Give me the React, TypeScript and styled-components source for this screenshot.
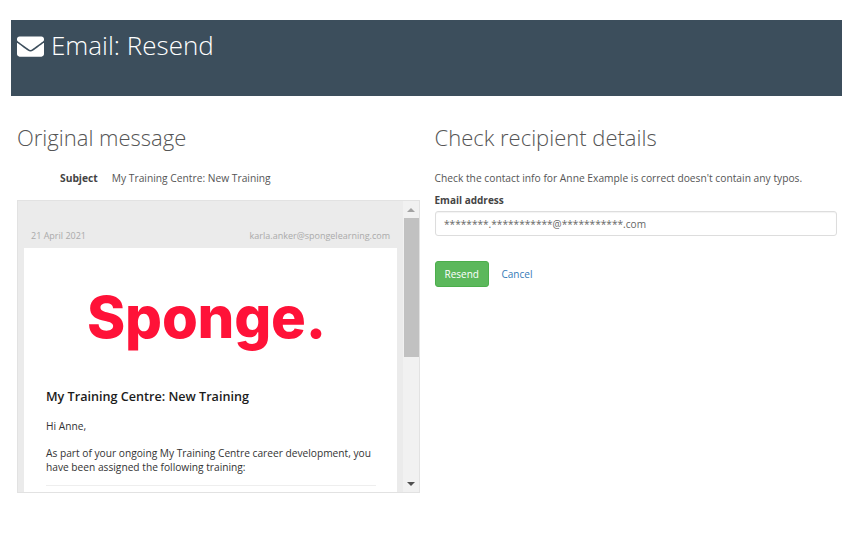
import React from "react";
import styled, { createGlobalStyle } from "styled-components";
import { FaEnvelope } from "react-icons/fa";

const GlobalStyle = createGlobalStyle`
  html, body {
    margin: 0;
    padding: 0;
    background: #fff;
    font-family: "Open Sans", "Liberation Sans", sans-serif;
  }
  * {
    box-sizing: border-box;
  }
`;

const Page = styled.div`
  width: 847px;
  height: 536px;
  padding: 20px 5px 0 10.5px;
  overflow: hidden;
`;

const Banner = styled.header`
  height: 76px;
  background: #3c4e5c;
  color: #fff;
  display: flex;
  align-items: flex-start;
  gap: 7px;
  padding: 8px 0 0 6.5px;
`;

const BannerIcon = styled(FaEnvelope)`
  margin-top: 5px;
`;

const BannerTitle = styled.h1`
  margin: 0;
  font-size: 26px;
  line-height: 35px;
  font-weight: 300;
`;

const Columns = styled.div`
  display: grid;
  grid-template-columns: 403px 402.5px;
  column-gap: 14.5px;
  padding: 25px 0 0 6.5px;
`;

const Column = styled.section`
  display: flex;
  flex-direction: column;
`;

const SectionTitle = styled.h2`
  margin: 0;
  font-size: 22px;
  line-height: 32px;
  font-weight: 300;
  color: #555;
`;

const SubjectRow = styled.div`
  display: flex;
  gap: 14px;
  margin-top: 18px;
  padding-left: 43px;
  font-size: 10.25px;
  line-height: 14px;
  color: #555;
`;

const SubjectLabel = styled.strong`
  font-weight: 700;
  color: #444;
`;

const Preview = styled.div`
  display: flex;
  height: 293px;
  margin-top: 15px;
  border: 1px solid #e2e2e2;
  overflow: hidden;
`;

const Message = styled.div`
  flex: 1;
  background: #ebebeb;
  padding: 0 6px 0 6px;
  overflow: hidden;
`;

const MessageMeta = styled.div`
  display: flex;
  justify-content: space-between;
  padding: 28px 7px 5px 7px;
  font-size: 9px;
  line-height: 14px;
  color: #aaa;
`;

const MessageCard = styled.div`
  background: #fff;
  padding: 32px 21px 0 22px;
  height: 260px;
`;

const LogoRow = styled.div`
  display: flex;
  padding-left: 41px;
  height: 95px;
`;

const Logo = styled.span`
  font-family: Inter, "Liberation Sans", sans-serif;
  font-size: 58px;
  line-height: 74px;
  font-weight: 800;
  letter-spacing: -0.2px;
  color: #ff1238;
`;

const MessageHeading = styled.h3`
  margin: 13px 0 0;
  font-size: 12.6px;
  line-height: 18px;
  font-weight: 600;
  color: #1c1c1c;
`;

const MessageText = styled.p`
  margin: 13px 0 0;
  font-size: 10.2px;
  line-height: 14px;
  color: #333;
`;

const MessageRule = styled.hr`
  margin: 11px 0 0;
  border: 0;
  border-top: 1px solid #eee;
`;

const Scrollbar = styled.div`
  width: 16px;
  background: #f1f1f1;
  display: flex;
  flex-direction: column;
  align-items: center;
`;

const ScrollThumb = styled.div`
  width: 15px;
  height: 139px;
  background: #c1c1c1;
`;

const ScrollSpace = styled.div`
  flex: 1;
`;

const ScrollArrow = styled.div<{ $down?: boolean }>`
  height: 17px;
  width: 100%;
  display: flex;
  align-items: center;
  justify-content: center;

  &::before {
    content: "";
    border-left: 4px solid transparent;
    border-right: 4px solid transparent;
    border-${(p) => (p.$down ? "top" : "bottom")}: 4px solid ${(p) => (p.$down ? "#505050" : "#a3a3a3")};
  }
`;

const Intro = styled.p`
  margin: 18px 0 0;
  font-size: 10.25px;
  line-height: 14px;
  color: #555;
`;

const FieldLabel = styled.label`
  display: block;
  margin-top: 8px;
  font-size: 10px;
  line-height: 14px;
  font-weight: 700;
  color: #444;
`;

const EmailInput = styled.div`
  height: 25px;
  margin-top: 4px;
  padding: 0 8.5px;
  border: 1px solid #ddd;
  border-radius: 3px;
  box-shadow: inset 0 1px 1px rgba(0, 0, 0, 0.05);
  font-size: 10.15px;
  line-height: 24px;
  color: #666;
`;

const Actions = styled.div`
  display: flex;
  align-items: center;
  gap: 12.5px;
  margin-top: 25px;
`;

const ResendButton = styled.button`
  width: 54.5px;
  height: 26px;
  padding: 0;
  border: 1px solid #4cae4c;
  border-radius: 3px;
  background: #5cb85c;
  color: #fff;
  font: 400 10px "Open Sans", sans-serif;
`;

const CancelLink = styled.a`
  font-size: 10px;
  color: #337ab7;
`;

export default function App() {
  return (
    <Page>
      <GlobalStyle />
      <Banner>
        <BannerIcon size={27} />
        <BannerTitle>Email: Resend</BannerTitle>
      </Banner>
      <Columns>
        <Column>
          <SectionTitle>Original message</SectionTitle>
          <SubjectRow>
            <SubjectLabel>Subject</SubjectLabel>
            <span>My Training Centre: New Training</span>
          </SubjectRow>
          <Preview>
            <Message>
              <MessageMeta>
                <span>21 April 2021</span>
                <span>karla.anker@spongelearning.com</span>
              </MessageMeta>
              <MessageCard>
                <LogoRow>
                  <Logo>Sponge.</Logo>
                </LogoRow>
                <MessageHeading>My Training Centre: New Training</MessageHeading>
                <MessageText>Hi Anne,</MessageText>
                <MessageText>
                  As part of your ongoing My Training Centre career development, you have been assigned the following training:
                </MessageText>
                <MessageRule />
              </MessageCard>
            </Message>
            <Scrollbar>
              <ScrollArrow />
              <ScrollThumb />
              <ScrollSpace />
              <ScrollArrow $down />
            </Scrollbar>
          </Preview>
        </Column>
        <Column>
          <SectionTitle>Check recipient details</SectionTitle>
          <Intro>Check the contact info for Anne Example is correct doesn't contain any typos.</Intro>
          <FieldLabel>Email address</FieldLabel>
          <EmailInput>********.***********@***********.com</EmailInput>
          <Actions>
            <ResendButton>Resend</ResendButton>
            <CancelLink>Cancel</CancelLink>
          </Actions>
        </Column>
      </Columns>
    </Page>
  );
}
